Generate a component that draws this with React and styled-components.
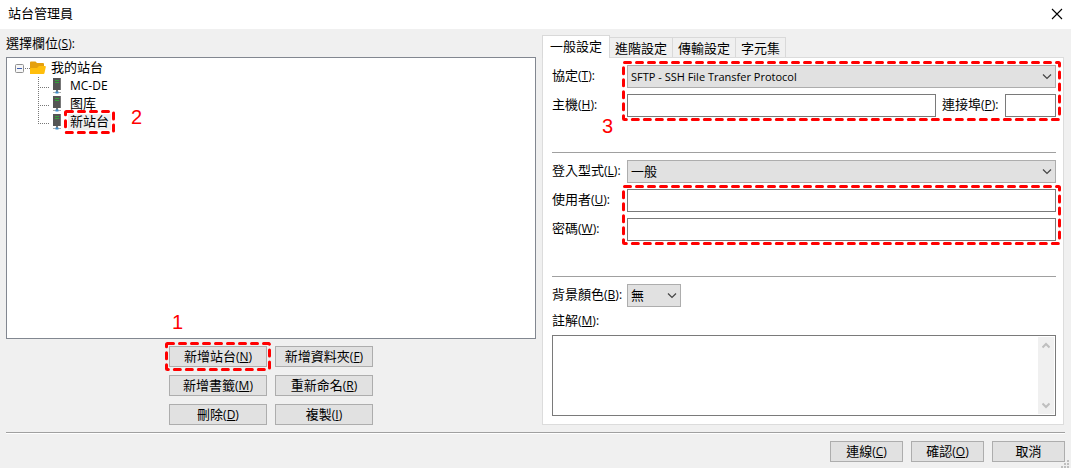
import React from "react";
import styled, { createGlobalStyle } from "styled-components";

const Global = createGlobalStyle`
  * { box-sizing: border-box; }
  body { margin: 0; background: #f0f0f0; }
  body, button, input, select, textarea {
    font-family: "Noto Sans CJK TC", "Noto Sans CJK SC", sans-serif;
    font-size: 13px;
    line-height: 18px;
    color: #000;
  }
`;

const Dialog = styled.div`
  position: relative;
  display: flex;
  flex-direction: column;
  min-height: 100vh;
`;

const TitleBar = styled.header`
  display: flex;
  align-items: center;
  justify-content: space-between;
  height: 29px;
  padding: 0 8px;
  background: #fff;
`;

const Title = styled.h1`
  margin: 0;
  padding-bottom: 4px;
  font-size: 13px;
  font-weight: 400;
`;

const CloseButton = styled.button`
  display: flex;
  padding: 0 0 2px;
  border: 0;
  background: none;
`;

const Main = styled.main`
  flex: 1;
  display: grid;
  grid-template-columns: 530fr 522fr;
  gap: 6px;
  padding: 6px 7px 0 6px;
`;

const SitePane = styled.section`
  display: flex;
  flex-direction: column;
`;

const PaneLabel = styled.div`
  height: 22px;
  line-height: 16px;
`;

const Latin = styled.span`
  font-family: "Open Sans", "Noto Sans", sans-serif;
  font-size: 12px;
`;

const Tree = styled.ul`
  flex: 1;
  margin: 0;
  padding: 1px 8px;
  list-style: none;
  background: #fff;
  border: 1px solid #828790;
`;

const SubTree = styled.ul`
  margin: 0;
  padding: 0 0 0 23px;
  list-style: none;
`;

const TreeRow = styled.div`
  display: flex;
  align-items: center;
  height: 18px;
`;

const TreeText = styled.span`
  position: relative;
  margin-left: ${(p) => (p.$root ? 3 : 7)}px;
  padding: 0 2px 2px;
  line-height: 14px;
  background: ${(p) => (p.$selected ? "#f0f0f0" : "none")};
`;

const SiteActions = styled.div`
  display: grid;
  grid-template-columns: 98px 98px;
  justify-content: center;
  gap: 8px;
  padding: 7px 0;
`;

const ButtonSlot = styled.div`
  position: relative;
  display: grid;
`;

const PushButton = styled.button`
  min-width: 73px;
  height: 21px;
  padding: 0 0 1px;
  line-height: 18px;
  background: #e1e1e1;
  border: 1px solid #adadad;
`;

const SettingsPane = styled.section`
  display: flex;
  flex-direction: column;
`;

const TabList = styled.div`
  display: flex;
  align-items: flex-end;
  height: 22px;
`;

const Tab = styled.button`
  position: relative;
  height: ${(p) => (p.$active ? 23 : 20)}px;
  margin: 0 0 ${(p) => (p.$active ? -1 : 0)}px ${(p) => (p.$active ? 0 : -1)}px;
  padding: 0 ${(p) => (p.$active ? 7 : 5)}px ${(p) => (p.$active ? 2 : 0)}px;
  line-height: 18px;
  background: ${(p) => (p.$active ? "#fff" : "#f0f0f0")};
  border: 1px solid #d9d9d9;
  border-bottom: 0;
  z-index: ${(p) => (p.$active ? 1 : 0)};
`;

const Panel = styled.div`
  flex: 1;
  display: flex;
  flex-direction: column;
  margin-bottom: 7px;
  padding: 7px 7px 8px 9px;
  background: #fff;
  border: 1px solid #dcdcdc;
`;

const Fields = styled.div`
  position: relative;
  display: grid;
  grid-template-columns: 75px 1fr;
  grid-auto-rows: 23px;
  row-gap: 6px;
  align-items: center;
`;

const Label = styled.label`
  padding-bottom: 2px;
  line-height: 18px;
  white-space: nowrap;
`;

const HostRow = styled.div`
  display: grid;
  grid-template-columns: 1fr 57px 51px;
  column-gap: 6px;
  align-items: center;
`;

const TextInput = styled.input`
  width: 100%;
  min-width: 0;
  height: 23px;
  padding: 0 4px;
  background: #fff;
  border: 1px solid #7a7a7a;
  border-radius: 0;
  outline: 0;
`;

const SelectBox = styled.div`
  position: relative;
  width: ${(p) => p.$width || "100%"};
`;

const NativeSelect = styled.select`
  display: block;
  width: 100%;
  height: 23px;
  padding: 0 20px ${(p) => (p.$latin ? 0 : 2)}px 3px;
  appearance: none;
  font-family: ${(p) => (p.$latin ? '"Open Sans", "Noto Sans", sans-serif' : "inherit")};
  font-size: ${(p) => (p.$latin ? 11 : 13)}px;
  background: #e1e1e1;
  border: 1px solid #adadad;
  border-radius: 0;
`;

const SelectArrow = styled.svg`
  position: absolute;
  top: 8px;
  right: 4px;
  pointer-events: none;
`;

const Rule = styled.hr`
  width: 100%;
  margin: 35px 0 7px;
  border: 0;
  border-top: 1px solid #a0a0a0;
`;

const NoteLabel = styled.label`
  padding: 4px 0 5px;
`;

const NoteBox = styled.div`
  flex: 1;
  display: flex;
  min-height: 81px;
  padding: 1px;
  border: 1px solid #7a7a7a;
`;

const NoteInput = styled.textarea`
  flex: 1;
  min-width: 0;
  height: 77px;
  min-height: 100%;
  padding: 2px;
  border: 0;
  outline: 0;
  resize: none;
  overflow: hidden;
`;

const ScrollTrack = styled.div`
  display: flex;
  flex-direction: column;
  justify-content: space-between;
  align-items: center;
  width: 16px;
  padding: 5px 0;
  background: #f0f0f0;
`;

const Footer = styled.footer`
  display: flex;
  justify-content: flex-end;
  gap: 8px;
  margin: 0 6px;
  padding: 8px 0 6px;
  border-top: 1px solid #a0a0a0;
  box-shadow: inset 0 1px #fff;
  margin-bottom: 1px;
`;

const Grip = styled.svg`
  position: absolute;
  right: 2px;
  bottom: 1px;
`;

const OutlineSvg = styled.svg`
  position: absolute;
  grid-area: ${(p) => p.$area || "auto"};
  top: -4px;
  left: ${(p) => (p.$area ? -5 : -4)}px;
  width: ${(p) => (p.$area ? "calc(100% + 10px)" : "calc(100% + 8px)")};
  height: calc(100% + 8px);
  z-index: 2;
  pointer-events: none;

  rect {
    width: calc(100% - 3px);
    height: calc(100% - 3px);
    fill: none;
    stroke: #f00;
    stroke-width: 3px;
    stroke-dasharray: 6 6;
    stroke-linecap: round;
  }
`;

const StepNumber = styled.span`
  position: absolute;
  top: ${(p) => p.$top}px;
  left: ${(p) => p.$left}px;
  font: 20px/20px "Liberation Sans", Arial, sans-serif;
  color: #f00;
`;

function Outline(props) {
  return (
    <OutlineSvg aria-hidden="true" {...props}>
      <rect x="1.5" y="1.5" rx="1" />
    </OutlineSvg>
  );
}

function Key({ children, colon }) {
  return (
    <Latin>
      (<u>{children}</u>){colon && ":"}
    </Latin>
  );
}

function Select({ id, options, width, latin }) {
  return (
    <SelectBox $width={width}>
      <NativeSelect id={id} $latin={latin}>
        {options.map((o) => (
          <option key={o}>{o}</option>
        ))}
      </NativeSelect>
      <SelectArrow width="10" height="7" viewBox="0 0 10 7" aria-hidden="true">
        <path d="M1 1.5 5 5.5 9 1.5" fill="none" stroke="#444" strokeWidth="1.2" />
      </SelectArrow>
    </SelectBox>
  );
}

function FolderIcon() {
  return (
    <svg width="16" height="14" viewBox="0 0 16 14" aria-hidden="true">
      <path d="M0 1.5Q0 .5 1 .5H5.5L7 2H13Q14 2 14 3V12H0Z" fill="#e5a00d" />
      <path d="M0 13V7.5Q0 7 1 7H7L9 5H15Q16 5 15.8 6L14.5 12Q14.3 13 13.5 13Z" fill="#ffbe0c" />
    </svg>
  );
}

function ServerIcon() {
  return (
    <svg width="8" height="16" viewBox="0 0 8 16" aria-hidden="true">
      <path d="M0 0H8V12H0Z" fill="#555" />
      <path d="M7 0H8V12H7Z" fill="#777" />
      <path d="M2 2.5H6M2 4.5H6" stroke="#35a03b" />
      <path d="M4 12V14" stroke="#777" strokeWidth="2" />
      <path d="M0 14.5H8" stroke="#aaa" />
      <path d="M2.5 14.5H5.5" stroke="#3b8fd0" strokeWidth="2" />
    </svg>
  );
}

function Branch({ last }) {
  return (
    <svg width="15" height="18" viewBox="0 0 15 18" aria-hidden="true">
      <path
        d={last ? "M.5 0V11M0 10.5H12" : "M.5 0V18M0 10.5H12"}
        fill="none"
        stroke="#777"
        strokeDasharray="1 1"
      />
    </svg>
  );
}

function Expander() {
  return (
    <svg width="15" height="10" viewBox="0 0 15 10" aria-hidden="true">
      <rect x=".5" y="1.5" width="8" height="8" rx="1" fill="#f7f7f7" stroke="#919191" />
      <path d="M2 5.5H7" stroke="#3c5cae" />
      <path d="M10 5.5H15" stroke="#777" strokeDasharray="1 1" />
    </svg>
  );
}

const tabs = ["一般設定", "進階設定", "傳輸設定", "字元集"];

const actions = [
  ["新增站台", "N"],
  ["新增資料夾", "F"],
  ["新增書籤", "M"],
  ["重新命名", "R"],
  ["刪除", "D"],
  ["複製", "I"],
];

export default function App() {
  return (
    <Dialog>
      <Global />
      <TitleBar>
        <Title>站台管理員</Title>
        <CloseButton aria-label="關閉">
          <svg width="12" height="12" viewBox="0 0 12 12">
            <path d="M1 1 11 11M11 1 1 11" stroke="#000" strokeWidth="1.1" />
          </svg>
        </CloseButton>
      </TitleBar>

      <Main>
        <SitePane>
          <PaneLabel id="sites">
            選擇欄位<Key colon>S</Key>
          </PaneLabel>
          <Tree aria-labelledby="sites">
            <li>
              <TreeRow>
                <Expander />
                <FolderIcon />
                <TreeText $root>我的站台</TreeText>
              </TreeRow>
              <SubTree>
                <li>
                  <TreeRow>
                    <Branch />
                    <ServerIcon />
                    <TreeText>
                      <Latin>MC-DE</Latin>
                    </TreeText>
                  </TreeRow>
                </li>
                <li>
                  <TreeRow>
                    <Branch />
                    <ServerIcon />
                    <TreeText lang="zh-Hans">图库</TreeText>
                  </TreeRow>
                </li>
                <li>
                  <TreeRow>
                    <Branch last />
                    <ServerIcon />
                    <TreeText $selected>
                      新站台
                      <Outline />
                    </TreeText>
                  </TreeRow>
                </li>
              </SubTree>
            </li>
          </Tree>
          <SiteActions>
            {actions.map(([text, key], i) => (
              <ButtonSlot key={key}>
                <PushButton>
                  {text}
                  <Key>{key}</Key>
                </PushButton>
                {i === 0 && <Outline />}
              </ButtonSlot>
            ))}
          </SiteActions>
        </SitePane>

        <SettingsPane>
          <TabList role="tablist">
            {tabs.map((t, i) => (
              <Tab key={t} role="tab" aria-selected={i === 0} $active={i === 0}>
                {t}
              </Tab>
            ))}
          </TabList>
          <Panel role="tabpanel">
            <Fields>
              <Label htmlFor="protocol">
                協定<Key colon>T</Key>
              </Label>
              <Select id="protocol" latin options={["SFTP - SSH File Transfer Protocol"]} />
              <Label htmlFor="host">
                主機<Key colon>H</Key>
              </Label>
              <HostRow>
                <TextInput id="host" />
                <Label htmlFor="port">
                  連接埠<Key colon>P</Key>
                </Label>
                <TextInput id="port" />
              </HostRow>
              <Outline $area="1 / 2 / 3 / 3" />
            </Fields>
            <Rule />
            <Fields>
              <Label htmlFor="logon">
                登入型式<Key colon>L</Key>
              </Label>
              <Select id="logon" options={["一般"]} />
              <Label htmlFor="user">
                使用者<Key colon>U</Key>
              </Label>
              <TextInput id="user" />
              <Label htmlFor="password">
                密碼<Key colon>W</Key>
              </Label>
              <TextInput id="password" type="password" />
              <Outline $area="2 / 2 / 4 / 3" />
            </Fields>
            <Rule />
            <Fields>
              <Label htmlFor="color">
                背景顏色<Key colon>B</Key>
              </Label>
              <Select id="color" width="54px" options={["無"]} />
            </Fields>
            <NoteLabel htmlFor="note">
              註解<Key colon>M</Key>
            </NoteLabel>
            <NoteBox>
              <NoteInput id="note" />
              <ScrollTrack aria-hidden="true">
                <svg width="8" height="7" viewBox="0 0 8 7">
                  <path d="M.5 5.5 4 2 7.5 5.5" fill="none" stroke="#bfbfbf" strokeWidth="2" />
                </svg>
                <svg width="8" height="7" viewBox="0 0 8 7">
                  <path d="M.5 1.5 4 5 7.5 1.5" fill="none" stroke="#bfbfbf" strokeWidth="2" />
                </svg>
              </ScrollTrack>
            </NoteBox>
          </Panel>
        </SettingsPane>
      </Main>

      <Footer>
        <PushButton>
          連線<Key>C</Key>
        </PushButton>
        <PushButton>
          確認<Key>O</Key>
        </PushButton>
        <PushButton>取消</PushButton>
      </Footer>

      <Grip width="8" height="8" viewBox="0 0 8 8" aria-hidden="true">
        <path d="M6 0h2v2H6zM3 3h2v2H3zM6 3h2v2H6zM0 6h2v2H0zM3 6h2v2H3zM6 6h2v2H6z" fill="#bfbfbf" />
      </Grip>
      <StepNumber $top={312} $left={172}>1</StepNumber>
      <StepNumber $top={107} $left={131}>2</StepNumber>
      <StepNumber $top={116} $left={602}>3</StepNumber>
    </Dialog>
  );
}
